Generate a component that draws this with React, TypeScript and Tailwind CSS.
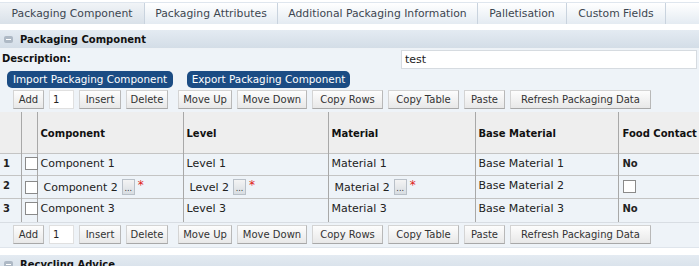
import React from 'react';

const tabs = [
  { label: 'Packaging Component', w: 'w-[145px]', active: true },
  { label: 'Packaging Attributes', w: 'w-[133px]' },
  { label: 'Additional Packaging Information', w: 'w-[200px]' },
  { label: 'Palletisation', w: 'w-[89px]' },
  { label: 'Custom Fields', w: 'w-[99px]' },
];

const tools = [
  'Insert',
  'Delete',
  'Move Up',
  'Move Down',
  'Copy Rows',
  'Copy Table',
  'Paste',
  'Refresh Packaging Data',
];

function Btn({ children, className = '' }: { children: React.ReactNode; className?: string }) {
  return (
    <div
      className={`h-[19px] px-[4px] flex items-center justify-center border border-[#d4d4d4] border-r-[#b8b8b8] border-b-[#a8a8a8] bg-gradient-to-b from-[#fdfdfd] to-[#e8e8e8] text-[10px] text-[#333] whitespace-nowrap ${className}`}
    >
      {children}
    </div>
  );
}

const toolW: Record<string, string> = {
  Insert: 'w-[42px]',
  Delete: 'w-[42px] mr-[5px]',
  'Move Up': 'w-[54px]',
  'Move Down': 'w-[70px]',
  'Copy Rows': 'w-[71px]',
  'Copy Table': 'w-[71px]',
  Paste: 'w-[41px]',
  'Refresh Packaging Data': 'w-[141px]',
};

function Toolbar() {
  return (
    <div className="flex items-center h-[21px] pl-[13px]">
      <Btn className="w-[31px]">Add</Btn>
      <div className="ml-[5px] w-[25px] h-[19px] bg-white border border-[#e0e0e0] pl-[3px] flex items-center text-[10px] text-[#222]">1</div>
      <div className="flex items-center gap-[5px] ml-[5px]">
        {tools.map((t) => (
          <Btn key={t} className={toolW[t]}>
            {t}
          </Btn>
        ))}
      </div>
    </div>
  );
}

function Box() {
  return <span className="inline-block w-[13px] h-[13px] bg-white border border-[#8a8a8a] align-middle" />;
}

function Lookup() {
  return (
    <span className="inline-flex items-end justify-center w-[13px] h-[16px] ml-[4px] bg-gradient-to-b from-[#f4f4f4] to-[#d8dde2] border border-[#b9c0c8] text-[8px] leading-[8px] text-[#333] pb-[1px] align-middle">
      ...
    </span>
  );
}

function Req() {
  return <span className="ml-[3px] text-[#e02020] text-[12px] align-top">*</span>;
}

const cell = 'border-r border-[#a8a8a8] pl-[3px] pt-[3px]';

export default function App() {
  return (
    <div
      className="w-[699px] h-[266px] overflow-hidden bg-[#eef3f8] text-[11px] leading-[13px] text-[#222]"
      style={{ fontFamily: '"DejaVu Sans", Verdana, sans-serif' }}
    >
      {/* Tabs */}
      <div className="pt-[2px] bg-white">
        <div className="flex h-[22px] border-t border-[#dfe6ee] bg-gradient-to-b from-[#ffffff] to-[#e4ebf2]">
          {tabs.map((t) => (
            <div
              key={t.label}
              className={`${t.w} flex items-center justify-center border-r border-[#c9d3de] text-[10.8px] text-[#3d4650] ${
                t.active ? 'bg-gradient-to-b from-[#f1f4f7] to-[#d9e1e9]' : ''
              }`}
            >
              {t.label}
            </div>
          ))}
        </div>
      </div>
      <div className="h-[6px] bg-white" />

      {/* Section header */}
      <div className="h-[19px] flex items-center bg-gradient-to-b from-[#e4ebf2] to-[#d3dde7] border-b border-[#eef2f6]">
        <span className="ml-[4px] w-[9px] h-[7px] rounded-[2px] bg-[#aeb9c5] flex items-center justify-center">
          <span className="w-[5px] h-[1px] bg-white" />
        </span>
        <span className="ml-[7px] font-bold text-[10px] text-[#111]">Packaging Component</span>
      </div>

      {/* Description */}
      <div className="flex items-start h-[20px] mt-[1px]">
        <span className="ml-[2px] mt-[2px] font-bold text-[10px] text-[#111]">Description:</span>
        <div className="ml-auto mr-[2px] w-[296px] h-[19px] bg-white border border-[#d6dbe0] flex items-center pl-[3px]">
          test
        </div>
      </div>

      {/* Import / Export */}
      <div className="flex items-center gap-[14px] pl-[7px] h-[18px]">
        <div className="w-[166px] h-[17px] rounded-[5px] bg-[#1b4c84] text-white text-[10.4px] flex items-center justify-center whitespace-nowrap">Import Packaging Component</div>
        <div className="w-[163px] h-[17px] rounded-[5px] bg-[#1b4c84] text-white text-[10.4px] flex items-center justify-center whitespace-nowrap">Export Packaging Component</div>
      </div>

      <div className="mt-[1px]">
        <Toolbar />
      </div>

      {/* Table */}
      <table className="mt-[2px] w-[699px] border-collapse table-fixed">
        <colgroup>
          <col className="w-[21px]" />
          <col className="w-[16px]" />
          <col className="w-[146px]" />
          <col className="w-[145px]" />
          <col className="w-[147px]" />
          <col className="w-[143px]" />
          <col className="w-[81px]" />
        </colgroup>
        <thead>
          <tr className="h-[41px] bg-[#eeeeee] font-bold text-[10px] text-[#111]">
            <th className="border-r border-[#a8a8a8]" />
            <th className="border-r border-[#a8a8a8]" />
            <th className="border-r border-[#a8a8a8] text-left pl-[3px] pt-[3px]">Component</th>
            <th className="border-r border-[#a8a8a8] text-left pl-[3px] pt-[3px]">Level</th>
            <th className="border-r border-[#a8a8a8] text-left pl-[3px] pt-[3px]">Material</th>
            <th className="border-r border-[#a8a8a8] text-left pl-[3px] pt-[3px]">Base Material</th>
            <th className="text-left pl-[4px] pt-[3px] whitespace-nowrap">Food Contact</th>
          </tr>
        </thead>
        <tbody className="align-top">
          <tr className="h-[22px] border-t border-[#c4c4c4]">
            <td className={`${cell} pl-[2px] font-bold text-[10px]`}>1</td>
            <td className={cell}><Box /></td>
            <td className={cell}>Component 1</td>
            <td className={cell}>Level 1</td>
            <td className={cell}>Material 1</td>
            <td className={cell}>Base Material 1</td>
            <td className="pl-[4px] pt-[3px] font-bold text-[10px]">No</td>
          </tr>
          <tr className="h-[23px] border-t border-[#c4c4c4]">
            <td className={`${cell} pl-[2px] font-bold text-[10px]`}>2</td>
            <td className={`${cell} pt-[5px]`}><Box /></td>
            <td className={`${cell} pl-[6px] whitespace-nowrap`}>
              <span className="align-middle">Component 2</span>
              <Lookup />
              <Req />
            </td>
            <td className={`${cell} pl-[6px] whitespace-nowrap`}>
              <span className="align-middle">Level 2</span>
              <Lookup />
              <Req />
            </td>
            <td className={`${cell} pl-[6px] whitespace-nowrap`}>
              <span className="align-middle">Material 2</span>
              <Lookup />
              <Req />
            </td>
            <td className={`${cell} pt-[1px]`}>Base Material 2</td>
            <td className="pl-[4px] pt-[4px]"><Box /></td>
          </tr>
          <tr className="h-[24px] border-t border-[#c4c4c4]">
            <td className={`${cell} pl-[2px] font-bold text-[10px]`}>3</td>
            <td className={cell}><Box /></td>
            <td className={cell}>Component 3</td>
            <td className={cell}>Level 3</td>
            <td className={cell}>Material 3</td>
            <td className={cell}>Base Material 3</td>
            <td className="pl-[4px] pt-[3px] font-bold text-[10px]">No</td>
          </tr>
        </tbody>
      </table>

      <div className="border-t border-[#d8dde3] pt-[1px] pb-[2px]">
        <Toolbar />
      </div>
      <div className="h-[1px] bg-[#dfe5ec]" />
      <div className="h-[7px] bg-white" />

      {/* Next section */}
      <div className="h-[19px] flex items-center bg-gradient-to-b from-[#e4ebf2] to-[#d3dde7]">
        <span className="ml-[4px] w-[9px] h-[7px] rounded-[2px] bg-[#aeb9c5] flex items-center justify-center">
          <span className="w-[5px] h-[1px] bg-white" />
        </span>
        <span className="ml-[7px] font-bold text-[10px] text-[#111]">Recycling Advice</span>
      </div>
    </div>
  );
}
